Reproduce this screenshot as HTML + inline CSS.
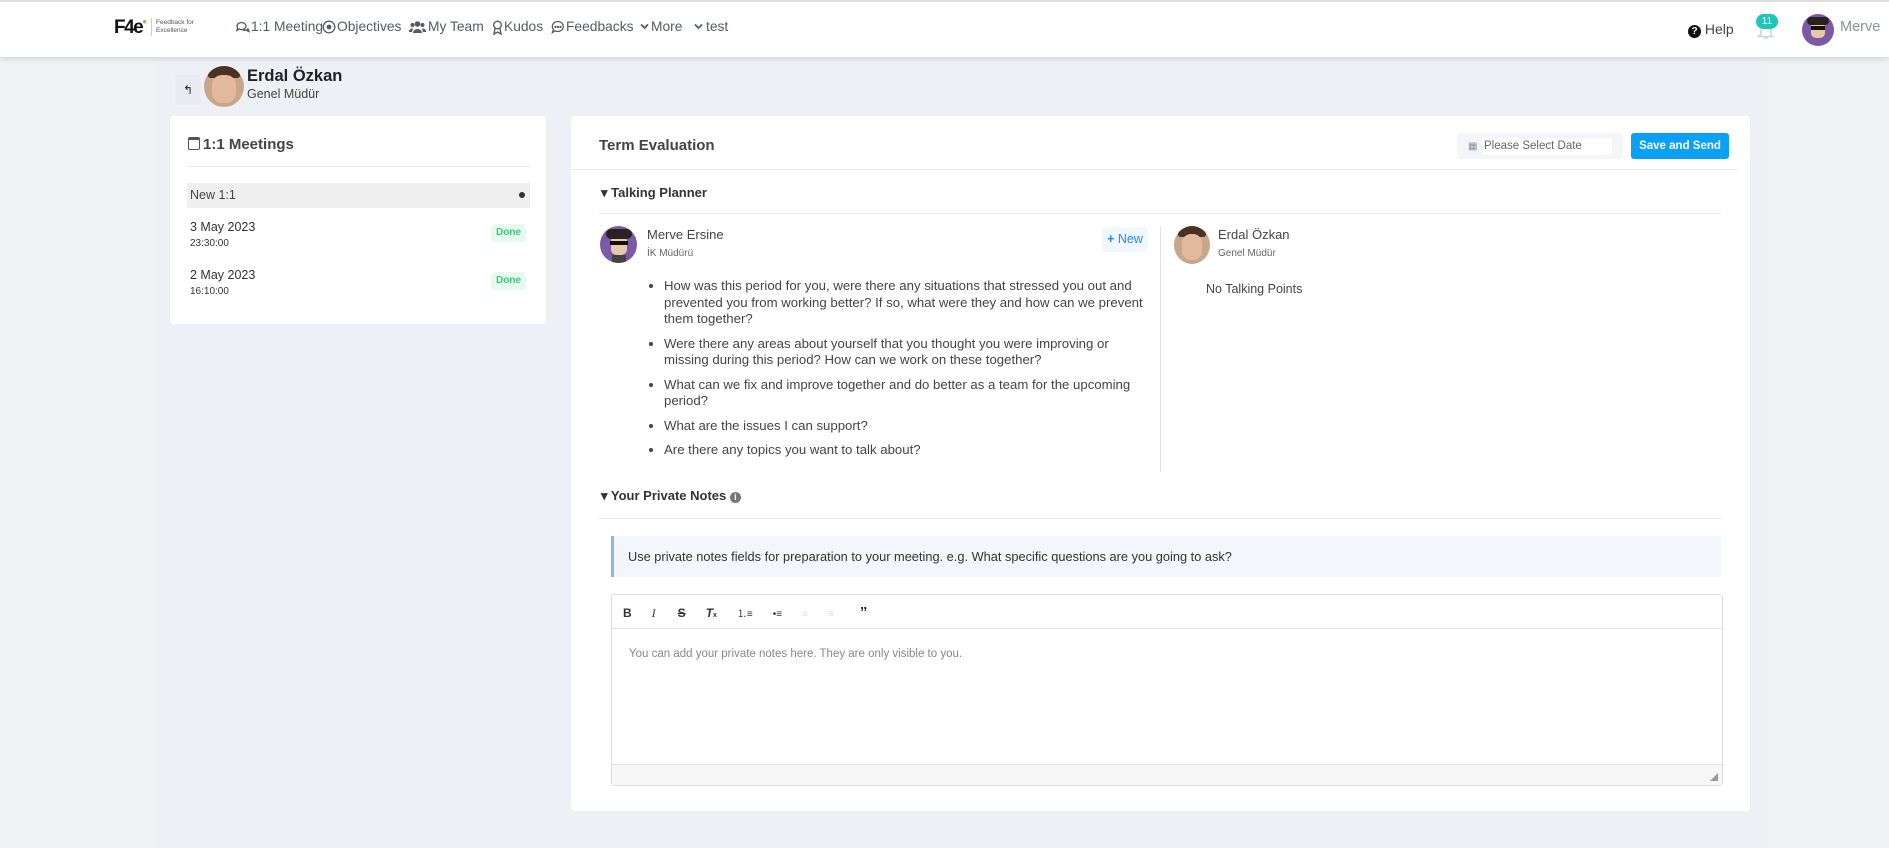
<!DOCTYPE html>
<html><head><meta charset="utf-8"><style>
*{box-sizing:border-box;margin:0;padding:0}
body{width:1889px;height:848px;background:#edf0f4;font-family:"Liberation Sans",sans-serif;color:#3a3f4b;position:relative;overflow:hidden}
.a{position:absolute;white-space:nowrap}
.hdr{position:absolute;left:0;top:0;width:1889px;height:57px;background:#fff;border-top:2px solid #ddd;box-shadow:0 2px 6px rgba(0,0,0,.12)}
.nav{font-size:13.8px;color:#555b66;top:19px}
.ic{position:absolute;top:20px}
.card{position:absolute;background:#fff;border-radius:4px}
.hl{position:absolute;height:1px;background:#e8eaee}
.done{position:absolute;background:#e6fbef;color:#3cc879;font-size:10px;font-weight:bold;border-radius:4px;text-align:center;line-height:18px}
ul li{margin-bottom:8px}
</style></head><body>
<div class="a" style="left:0;top:57px;width:154px;height:791px;background:#f0f2f6"></div>
<div class="a" style="left:1765px;top:57px;width:124px;height:791px;background:#eff1f5"></div>
<div class="hdr"></div>
<div class="a" style="left:114px;top:17px;font-size:19px;font-weight:900;color:#111;letter-spacing:-1.5px">F4e<span style="color:#8bc53f;font-size:8px;vertical-align:top">●</span></div>
<div class="a" style="left:151px;top:18px;width:1px;height:18px;background:#ccc"></div>
<div class="a" style="left:156px;top:19px;font-size:6.5px;line-height:8px;color:#555">Feedback for<br>Excellence</div>

<svg class="ic" style="left:235px" width="15" height="14" viewBox="0 0 15 14" fill="none" stroke="#555b66" stroke-width="1.3"><path d="M2 6a4.5 3.5 0 1 1 2 3l-2 1.5 .5-2.5z"/><path d="M8 10a4 3 0 0 0 5-1l1 2.5-2.5-1"/></svg>
<div class="a nav" style="left:251px">1:1 Meeting</div>
<svg class="ic" style="left:322px" width="14" height="14" viewBox="0 0 14 14"><circle cx="7" cy="7" r="5.8" fill="none" stroke="#555b66" stroke-width="1.3"/><circle cx="7" cy="7" r="2.4" fill="#555b66"/></svg>
<div class="a nav" style="left:337px">Objectives</div>
<svg class="ic" style="left:409px" width="17" height="14" viewBox="0 0 17 14" fill="#555b66"><circle cx="8.5" cy="4" r="2.8"/><circle cx="3.5" cy="5" r="2"/><circle cx="13.5" cy="5" r="2"/><path d="M4 13a4.5 4 0 0 1 9 0z"/><path d="M0 12a3.5 3 0 0 1 4-3.5L3 12z"/><path d="M17 12a3.5 3 0 0 0-4-3.5l1 3.5z"/></svg>
<div class="a nav" style="left:428px">My Team</div>
<svg class="ic" style="left:492px" width="11" height="15" viewBox="0 0 11 15" fill="none" stroke="#555b66" stroke-width="1.4"><circle cx="5.5" cy="5" r="3.8"/><path d="M3 8.5 2 14l3.5-2 3.5 2-1-5.5"/></svg>
<div class="a nav" style="left:504px">Kudos</div>
<svg class="ic" style="left:551px" width="14" height="14" viewBox="0 0 14 14" fill="none" stroke="#555b66" stroke-width="1.3"><path d="M7 1.5a5.5 5 0 1 1-3 9.3L1.5 12.5l1-3A5.5 5 0 0 1 7 1.5z"/><circle cx="4.5" cy="7" r=".5" fill="#555b66"/><circle cx="7" cy="7" r=".5" fill="#555b66"/><circle cx="9.5" cy="7" r=".5" fill="#555b66"/></svg>
<div class="a nav" style="left:566px">Feedbacks</div>
<svg class="ic" style="left:640px;top:23px" width="9" height="7" viewBox="0 0 9 7" fill="none" stroke="#555b66" stroke-width="1.8"><path d="M1 1.5l3.5 3.5 3.5-3.5"/></svg>
<div class="a nav" style="left:651px">More</div>
<svg class="ic" style="left:694px;top:23px" width="9" height="7" viewBox="0 0 9 7" fill="none" stroke="#555b66" stroke-width="1.8"><path d="M1 1.5l3.5 3.5 3.5-3.5"/></svg>
<div class="a nav" style="left:706px">test</div>

<div class="a" style="left:1688px;top:21px;font-size:14px;color:#444"><span style="display:inline-block;width:13px;height:13px;border-radius:50%;background:#111;color:#fff;font-size:10px;text-align:center;line-height:13px;font-weight:bold">?</span> Help</div>
<svg class="a" style="left:1757px;top:22px" width="18" height="18" viewBox="0 0 18 18" fill="none" stroke="#cfd6e2" stroke-width="1.6"><path d="M4 13V8a5 5 0 0 1 10 0v5l1.5 1.5h-15z"/><path d="M7 16h4"/></svg>
<div class="a" style="left:1756px;top:14px;width:22px;height:15px;border-radius:8px;background:#1cc6b8;color:#fff;font-size:10px;text-align:center;line-height:15px">11</div>
<div class="a" style="left:1802px;top:14px;width:32px;height:32px;border-radius:50%;background:#7a5aa6;overflow:hidden"><div style="position:absolute;left:9px;top:8px;width:14px;height:16px;background:#e8c9a6;border-radius:5px"></div><div style="position:absolute;left:5px;top:3px;width:22px;height:8px;background:#2a2220;border-radius:6px"></div><div style="position:absolute;left:9px;top:12px;width:14px;height:4px;background:#111"></div></div>
<div class="a" style="left:1840px;top:19px;font-size:14.5px;color:#8a909c">Merve</div>

<div class="a" style="left:175px;top:75px;width:26px;height:30px;background:#e9ecf0;border-radius:3px;font-size:12px;text-align:center;line-height:30px;color:#222">↰</div>
<div class="a" style="left:204px;top:66px;width:40px;height:41px;border-radius:50%;background:#c9a58a;overflow:hidden"><div style="position:absolute;left:4px;top:0;width:32px;height:12px;background:#4a3325;border-radius:14px 14px 4px 4px"></div><div style="position:absolute;left:8px;top:9px;width:24px;height:28px;background:#e2b99c;border-radius:10px"></div></div>
<div class="a" style="left:247px;top:67px;font-size:16.5px;font-weight:bold;color:#222">Erdal Özkan</div>
<div class="a" style="left:247px;top:87px;font-size:12.5px;color:#444">Genel Müdür</div>

<div class="card" style="left:170px;top:116px;width:376px;height:208px"></div>
<div class="a" style="left:188px;top:137px;width:12px;height:13px;border:1.5px solid #555;border-top-width:3px;border-radius:2px"></div>
<div class="a" style="left:203px;top:136px;font-size:15px;font-weight:bold;color:#444">1:1 Meetings</div>
<div class="hl" style="left:187px;top:166px;width:343px"></div>
<div class="a" style="left:187px;top:183px;width:343px;height:25px;background:#efefef"></div>
<div class="a" style="left:190px;top:188px;font-size:12.5px;color:#444">New 1:1</div>
<div class="a" style="left:519px;top:192px;width:6px;height:6px;border-radius:50%;background:#333"></div>
<div class="a" style="left:190px;top:220px;font-size:12.5px;color:#333">3 May 2023</div>
<div class="a" style="left:190px;top:238px;font-size:10px;color:#333">23:30:00</div>
<div class="done" style="left:491px;top:224px;width:35px">Done</div>
<div class="a" style="left:190px;top:268px;font-size:12.5px;color:#333">2 May 2023</div>
<div class="a" style="left:190px;top:286px;font-size:10px;color:#333">16:10:00</div>
<div class="done" style="left:491px;top:272px;width:35px">Done</div>

<div class="card" style="left:571px;top:116px;width:1179px;height:695px"></div>
<div class="a" style="left:599px;top:137px;font-size:15px;font-weight:bold;color:#444">Term Evaluation</div>
<div class="a" style="left:1457px;top:133px;width:166px;height:26px;background:#f3f6f9;border-radius:3px"></div>
<div class="a" style="left:1482px;top:138px;width:130px;height:17px;background:#fff"></div>
<div class="a" style="left:1468px;top:141px;font-size:10px;color:#8a8aa0">▦</div>
<div class="a" style="left:1484px;top:140px;font-size:11.5px;color:#666">Please Select Date</div>
<div class="a" style="left:1631px;top:133px;width:98px;height:26px;background:#0aa0f5;border-radius:3px;color:#fff;font-size:11.5px;font-weight:bold;text-align:center;line-height:26px">Save and Send</div>
<div class="hl" style="left:571px;top:169px;width:1166px"></div>
<div class="a" style="left:601px;top:185px;font-size:13px;font-weight:bold;color:#333">▾ Talking Planner</div>
<div class="hl" style="left:599px;top:213px;width:1122px"></div>

<div class="a" style="left:600px;top:226px;width:37px;height:37px;border-radius:50%;background:#7a5aa6;overflow:hidden"><div style="position:absolute;left:11px;top:9px;width:16px;height:20px;background:#e8c9a6;border-radius:6px"></div><div style="position:absolute;left:6px;top:3px;width:26px;height:10px;background:#2a2220;border-radius:7px"></div><div style="position:absolute;left:10px;top:15px;width:18px;height:4px;background:#111"></div><div style="position:absolute;left:12px;top:29px;width:14px;height:8px;background:#444"></div></div>
<div class="a" style="left:647px;top:227px;font-size:13px;color:#444">Merve Ersine</div>
<div class="a" style="left:647px;top:248px;font-size:10px;color:#666">İK Müdürü</div>
<div class="a" style="left:1102px;top:227px;width:46px;height:25px;background:#f0f7fe;border-radius:4px;color:#1a8df0;font-size:12.5px;text-align:center;line-height:25px"><b>+</b> New</div>
<div class="a" style="left:1160px;top:226px;width:1px;height:246px;background:#e0e2e6"></div>
<ul class="a" style="left:664px;top:278px;font-size:13.2px;line-height:16.5px;color:#444;list-style:disc">
<li>How was this period for you, were there any situations that stressed you out and<br>prevented you from working better? If so, what were they and how can we prevent<br>them together?</li>
<li>Were there any areas about yourself that you thought you were improving or<br>missing during this period? How can we work on these together?</li>
<li>What can we fix and improve together and do better as a team for the upcoming<br>period?</li>
<li>What are the issues I can support?</li>
<li>Are there any topics you want to talk about?</li>
</ul>
<div class="a" style="left:1174px;top:226px;width:36px;height:38px;border-radius:50%;background:#c9a58a;overflow:hidden"><div style="position:absolute;left:4px;top:0;width:28px;height:11px;background:#4a3325;border-radius:12px 12px 4px 4px"></div><div style="position:absolute;left:8px;top:8px;width:20px;height:26px;background:#e2b99c;border-radius:9px"></div></div>
<div class="a" style="left:1218px;top:227px;font-size:13px;color:#444">Erdal Özkan</div>
<div class="a" style="left:1218px;top:248px;font-size:10px;color:#666">Genel Müdür</div>
<div class="a" style="left:1206px;top:282px;font-size:12.5px;color:#444">No Talking Points</div>

<div class="a" style="left:601px;top:488px;font-size:13px;font-weight:bold;color:#333">▾ Your Private Notes <span style="display:inline-block;width:11px;height:11px;border-radius:50%;background:#777;color:#fff;font-size:9px;text-align:center;line-height:11px">i</span></div>
<div class="hl" style="left:599px;top:518px;width:1122px"></div>
<div class="a" style="left:611px;top:536px;width:1110px;height:41px;background:#f3f6fa;border-left:3px solid #8fb4e8"></div>
<div class="a" style="left:628px;top:549px;font-size:12.8px;color:#333">Use private notes fields for preparation to your meeting. e.g. What specific questions are you going to ask?</div>
<div class="a" style="left:611px;top:594px;width:1112px;height:192px;border:1px solid #ddd;border-radius:3px"></div>
<div class="hl" style="left:612px;top:628px;width:1110px;background:#e3e3e3"></div>
<div class="a" style="left:623px;top:604px;font-size:12px;color:#333;word-spacing:0"><b style="margin-right:20px">B</b><i style="font-family:'Liberation Serif';margin-right:22px">I</i><b style="text-decoration:line-through;margin-right:20px">S</b><b style="margin-right:20px"><i>T</i><small style="font-size:7px">x</small></b><span style="margin-right:20px;font-size:10px">⒈≡</span><span style="margin-right:20px;font-size:10px">•≡</span><span style="margin-right:20px;font-size:10px;color:#ddd">≡</span><span style="margin-right:26px;font-size:10px;color:#ddd">≡</span><b style="font-size:15px">”</b></div>
<div class="a" style="left:629px;top:648px;font-size:11.5px;color:#888">You can add your private notes here. They are only visible to you.</div>
<div class="a" style="left:612px;top:764px;width:1110px;height:21px;background:#f7f7f7;border-top:1px solid #e3e3e3"></div>
<div class="a" style="left:1710px;top:773px;width:0;height:0;border-left:8px solid transparent;border-bottom:8px solid #999"></div>
</body></html>
